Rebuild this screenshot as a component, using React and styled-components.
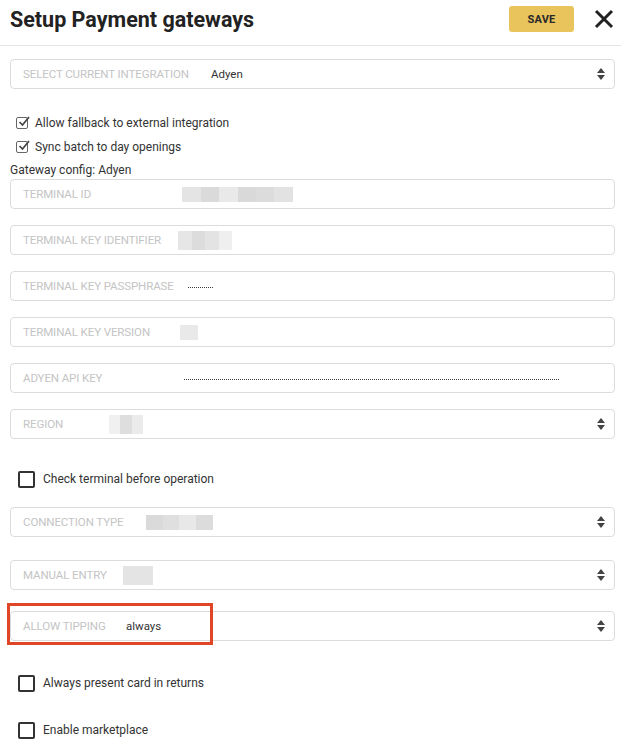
import React from 'react'
import styled, { createGlobalStyle } from 'styled-components'

const GlobalStyle = createGlobalStyle`
  html, body {
    margin: 0;
    padding: 0;
    background: #fff;
  }
  body {
    font-family: Roboto, "Liberation Sans", sans-serif;
    color: #333;
  }
`

const Page = styled.div`
  width: 621px;
  height: 748px;
  overflow: hidden;
  background: #fff;
`

const Header = styled.div`
  height: 46px;
  border-bottom: 1px solid #e4e4e4;
  display: flex;
  align-items: center;
  padding: 0 7px 0 10px;
  box-sizing: border-box;
`

const Title = styled.h1`
  flex: 1;
  margin: 0 0 6px;
  font-size: 21.5px;
  font-weight: 700;
  color: #222;
  letter-spacing: 0;
`

const SaveButton = styled.button`
  width: 65px;
  height: 26px;
  margin: 0 20px 7px 0;
  background: #e9c35c;
  border: none;
  border-radius: 3px;
  font-family: Roboto, "Liberation Sans", sans-serif;
  font-weight: 700;
  font-size: 11px;
  color: #2a2a2a;
  letter-spacing: 0.2px;
  cursor: pointer;
`

const Close = styled.button`
  width: 20px;
  height: 20px;
  padding: 0;
  margin-bottom: 7px;
  border: none;
  background: none;
  display: flex;
  cursor: pointer;
`

const Body = styled.div`
  padding: 13px 6px 0 10px;
  display: flex;
  flex-direction: column;
`

const FieldBox = styled.div`
  position: relative;
  height: 30px;
  border: 1px solid #dcdcdc;
  border-radius: 4px;
  box-sizing: border-box;
  display: flex;
  align-items: center;
  padding: 0 9px 0 12px;
  margin-top: ${p => p.$mt ?? 16}px;
`

const Label = styled.span`
  width: ${p => p.$w}px;
  flex-shrink: 0;
  font-size: 11.5px;
  color: #c4c4c4;
  letter-spacing: -0.1px;
  text-transform: uppercase;
  white-space: nowrap;
`

const Value = styled.span`
  flex: 1;
  font-size: 11.5px;
  color: #333;
  display: flex;
  align-items: center;
`

const Redacted = styled.span`
  display: inline-block;
  width: ${p => p.$w}px;
  height: ${p => p.$h}px;
  background: linear-gradient(90deg, ${p => p.$cells.map((c, i) => {
    const a = (i / p.$cells.length) * 100
    const b = ((i + 1) / p.$cells.length) * 100
    return `${c} ${a}%, ${c} ${b}%`
  }).join(', ')});
`

const Dots = styled.span`
  display: inline-block;
  width: ${p => p.$w}px;
  height: 1px;
  margin-top: 2px;
  background-image: repeating-linear-gradient(90deg, #3a3a3a 0 1px, transparent 1px 2px);
`

const Sorter = styled.span`
  display: flex;
  flex-direction: column;
  gap: 2px;
  align-items: center;

  &::before, &::after {
    content: '';
    border-left: 4px solid transparent;
    border-right: 4px solid transparent;
  }
  &::before { border-bottom: 5px solid #444; }
  &::after { border-top: 5px solid #444; }
`

const CheckRow = styled.label`
  display: flex;
  align-items: center;
  gap: ${p => (p.$checked ? 7 : 8)}px;
  height: ${p => p.$h ?? 24}px;
  padding-left: ${p => (p.$checked ? 6 : 8)}px;
  margin-top: ${p => p.$mt ?? 0}px;
  font-size: 12px;
  color: #333;
`

const Box = styled.span`
  width: ${p => (p.$checked ? 12 : 17)}px;
  height: ${p => (p.$checked ? 12 : 17)}px;
  box-sizing: border-box;
  border: ${p => (p.$checked ? '1.5px solid #666' : '2px solid #333')};
  border-radius: 2px;
  position: relative;
  flex-shrink: 0;
`

const Tick = styled.svg`
  position: absolute;
  left: 0;
  top: -4px;
`

const SectionTitle = styled.div`
  height: 14px;
  margin-top: 4px;
  font-size: 12px;
  color: #333;
  line-height: 14px;
`

const Highlight = styled.div`
  position: absolute;
  left: -4px;
  top: -9px;
  width: 206px;
  height: 42px;
  border: 3px solid #df4527;
  box-sizing: border-box;
  pointer-events: none;
`

const Check = ({ checked, children, ...rest }) => (
  <CheckRow $checked={checked} {...rest}>
    <Box $checked={checked}>
      {checked && (
        <Tick width="14" height="14" viewBox="0 0 14 14">
          <path d="M2.5 8 L5.5 11 L12 3" fill="none" stroke="#444" strokeWidth="1.7" />
        </Tick>
      )}
    </Box>
    {children}
  </CheckRow>
)

const Field = ({ label, labelWidth, select, mt, children }) => (
  <FieldBox $mt={mt}>
    <Label $w={labelWidth}>{label}</Label>
    <Value>{children}</Value>
    {select && <Sorter />}
  </FieldBox>
)

const grayA = ['#e4e4e4', '#dadada', '#e9e9e9', '#d9d9d9', '#dcdcdc', '#e2e2e2']

export default function App() {
  return (
    <Page>
      <GlobalStyle />
      <Header>
        <Title>Setup Payment gateways</Title>
        <SaveButton>SAVE</SaveButton>
        <Close aria-label="close">
          <svg width="20" height="20" viewBox="0 0 20 20">
            <path d="M2 2 L18 18 M18 2 L2 18" stroke="#222" strokeWidth="3" />
          </svg>
        </Close>
      </Header>
      <Body>
        <Field label="Select current integration" labelWidth={188} select mt={0}>
          Adyen
        </Field>

        <Check checked $mt={22}>Allow fallback to external integration</Check>
        <Check checked>Sync batch to day openings</Check>
        <SectionTitle>Gateway config: Adyen</SectionTitle>

        <Field label="Terminal ID" labelWidth={159} mt={2}>
          <Redacted $w={111} $h={15} $cells={grayA} />
        </Field>
        <Field label="Terminal key identifier" labelWidth={155}>
          <Redacted $w={54} $h={19} $cells={['#e6e6e6', '#dcdcdc', '#e3e3e3', '#efefef']} />
        </Field>
        <Field label="Terminal key passphrase" labelWidth={165}>
          <Dots $w={25} />
        </Field>
        <Field label="Terminal key version" labelWidth={157}>
          <Redacted $w={18} $h={15} $cells={['#e9e9e9']} />
        </Field>
        <Field label="Adyen API key" labelWidth={161}>
          <Dots $w={375} />
        </Field>
        <Field label="Region" labelWidth={86} select>
          <Redacted $w={34} $h={19} $cells={['#f0f0f0', '#dedede', '#ebebeb']} />
        </Field>

        <Check $h={32} $mt={24}>Check terminal before operation</Check>

        <Field label="Connection type" labelWidth={123} select mt={12}>
          <Redacted $w={67} $h={15} $cells={['#dadada', '#dfdfdf', '#e8e8e8', '#dcdcdc']} />
        </Field>
        <Field label="Manual entry" labelWidth={100} select mt={23}>
          <Redacted $w={30} $h={19} $cells={['#e4e4e4']} />
        </Field>
        <Field label="Allow tipping" labelWidth={103} select mt={21}>
          always
          <Highlight />
        </Field>

        <Check $h={32} $mt={26}>Always present card in returns</Check>
        <Check $h={32} $mt={15}>Enable marketplace</Check>
      </Body>
    </Page>
  )
}
